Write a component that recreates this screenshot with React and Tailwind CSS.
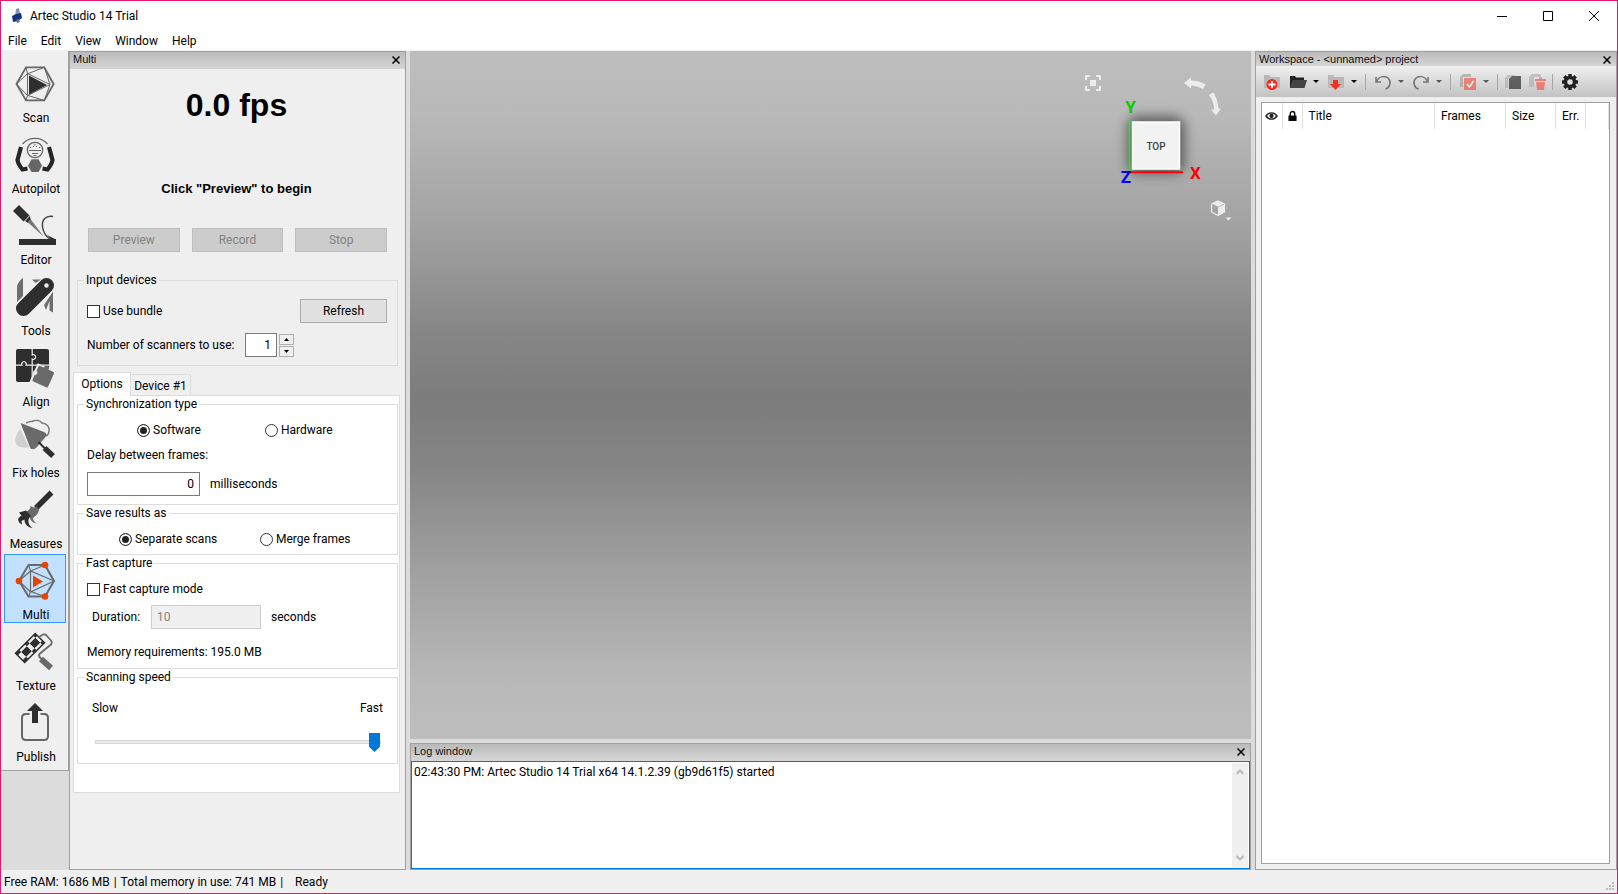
import React, { useState } from 'react';

const ScanIcon = () => (
  <svg viewBox="0 0 40 40" className="size-10 overflow-visible" fill="none" stroke="#666" strokeWidth="1.5">
    <path d="M1.5 20L11 3.3h18.3L38.6 20l-9.3 16.4H11z" strokeWidth="1.8" />
    <path d="M12.5 9.500v22L35 20.500z M11 3.300l1.500 6.500L29.300 3.300M29.300 3.300L35 20.500M11 36.400l1.500-5L29.300 36.400M29.300 36.400L35 20.500M1.500 20l11-10.500M1.500 20l11 11.500" strokeWidth="1" />
    <path d="M14 11.500v19l18-9.500z" fill="#2e2e2e" stroke="none" />
  </svg>
);

const AutopilotIcon = () => (
  <svg viewBox="0 0 40 40" className="size-10 overflow-visible" fill="none" stroke="#666">
    <path d="M7.500 9C14 1.500 26 1.500 32.500 9" strokeWidth="1.2" />
    <circle cx="20" cy="15" r="7.700" strokeWidth="1.300" />
    <path d="M14 15.500h12M17 18.500h6M18 11.500h1M21 11.500h1M15 12.500h1M24 12.500h1M20 9v1.500M18.500 20.500h3" strokeWidth="1" />
    <path d="M6 12L2.500 25q.5 4 5 9.500l5-1" stroke="#262626" strokeWidth="4.200" />
    <path d="M34 12l3.500 13q-.5 4-5 9.500l-5-1" stroke="#262626" strokeWidth="4.200" />
    <path d="M16.500 24.300h7l3.500 6.400-3.500 6.300h-7L13 30.700z" fill="#666" stroke="none" />
  </svg>
);

const EditorIcon = () => (
  <svg viewBox="0 0 40 40" className="size-10 overflow-visible" fill="none">
    <path d="M1 2l10.500 10.500" stroke="#2e2e2e" strokeWidth="8.500" />
    <path d="M10 15l5-5 1 5-3 2z" fill="#2e2e2e" />
    <path d="M12.500 16l3-3 13.500 18z" fill="#777" />
    <path d="M38 10.500C31 9 26.500 14 27.500 21c.8 6 4 10 8.500 13" stroke="#444" strokeWidth="1.500" />
    <path d="M32 29l9 4.500h-5z" fill="#2e2e2e" />
    <path d="M4 33h37v6H4z" fill="#2e2e2e" />
  </svg>
);

const ToolsIcon = () => (
  <svg viewBox="0 0 40 40" className="size-10 overflow-visible" fill="#6e6e6e">
    <path d="M2 25V11c0-4 3-8 6-10v18zM17 2.500h9l-5.500 3.500zM29 28l9-13.500v21l-3.500-2V24L31 33z" />
    <path d="M8.500 31.500L31.500 8.500" stroke="#2e2e2e" strokeWidth="15" strokeLinecap="round" />
    <circle cx="31.500" cy="8.500" r="2.200" fill="#efefef" />
  </svg>
);

const AlignIcon = () => (
  <svg viewBox="0 0 40 40" className="size-10 overflow-visible" fill="#2e2e2e">
    <rect x="1" y="1" width="33" height="33" rx="2" />
    <path d="M1 17.200h6a2.300 2.300 0 1 1 4 0h23M17.200 1v6a2.300 2.300 0 1 1 0 4v23" fill="none" stroke="#efefef" strokeWidth="1.200" />
    <g transform="rotate(24 28 28)">
      <rect x="18" y="18.500" width="21" height="21" fill="#efefef" />
      <rect x="20" y="20" width="17" height="17" rx="1.500" fill="#6a6a6a" />
      <circle cx="28" cy="19.500" r="2.500" fill="#6a6a6a" />
      <circle cx="19.500" cy="28" r="2.200" fill="#efefef" />
    </g>
  </svg>
);

const FixHolesIcon = () => (
  <svg viewBox="0 0 40 40" className="size-10 overflow-visible" fill="none">
    <path d="M5 10c-4 5-6 12-4 15 3 4 9 4 13 3z" fill="#d0d0d0" />
    <path d="M11 4c3-1 4-2 6-1.500 4-2 8-1 10 1.500 5 .5 8 4 7 8 0 3-1 4-3 5" stroke="#777" strokeWidth="1.400" />
    <path d="M5.500 4L29 13q4 2 1.500 5l-9 10.500q-3 3-6 1Z" fill="#6a6a6a" />
    <path d="M23.500 23l6.500 6.500" stroke="#2e2e2e" strokeWidth="2" />
    <path d="M29.500 29l8.500 8" stroke="#2e2e2e" strokeWidth="5.500" />
  </svg>
);

const MeasuresIcon = () => (
  <svg viewBox="0 0 40 40" className="size-10 overflow-visible" fill="none">
    <path d="M36.500 2.500L21 18" stroke="#2e2e2e" strokeWidth="5.500" />
    <path d="M15.500 16l3 1.500 3.500-1 2 4-2 4-4 3.500c0 2 1.500 4 3.500 5.500-5-1-7-4.500-7-8l-3-4c2.500-1 4-3 4-5.500z" fill="#6a6a6a" />
    <path d="M4 22.500l7-2 5 5.500c-5 4-2 10 1.500 12-5-.5-8-4-8-8.500l-3 1.500.5 3.500C4.500 33.500 2.500 31 3.500 28l3-2.500z" fill="#2e2e2e" />
  </svg>
);

const MultiIcon = () => (
  <svg viewBox="0 0 40 40" className="size-10 overflow-visible" fill="none" stroke="#6b6b6b">
    <path d="M4 20l9.500-16H30l9 16-9 15.500H13.500z" strokeWidth="2" />
    <path d="M15.500 10v21L39 20zM13.500 4l2 6L30 4M30 4l9 16M13.500 35.500l2-5L30 35.500M4 20l11.500-10M4 20l11.500 11" strokeWidth="1.200" />
    <path d="M18 14.500v12l10-6z" fill="#e64500" stroke="none" />
    <g fill="#e64500" stroke="none">
      <circle cx="30" cy="4" r="3.300" />
      <circle cx="4" cy="20" r="3.300" />
      <circle cx="30" cy="35.500" r="3.300" />
    </g>
  </svg>
);

const TextureIcon = () => (
  <svg viewBox="0 0 40 40" className="size-10 overflow-visible" fill="none">
    <g transform="translate(15 16) rotate(-45)">
      <rect x="-14" y="-6.500" width="28" height="13" fill="#efefef" stroke="#2e2e2e" strokeWidth="1.500" />
      <g fill="#2e2e2e">
        <path d="M-9-3.500h8v7h-8zM3-3.500h8v7H3z" />
        <path d="M-14-6.500h5v3h-5zM-1-6.500h4v3h-4zM11-6.500h3v3h-3zM-14 3.500h5v3h-5zM-1 3.500h4v3h-4zM11 3.500h3v3h-3z" />
      </g>
    </g>
    <path d="M24 5l4-2.500q2-.5 3.500 1l4.500 5q1.500 2 0 4L25 21.500q-2 2 0 4l3 3" stroke="#6a6a6a" strokeWidth="1.800" />
    <path d="M26 27l10 9" stroke="#6a6a6a" strokeWidth="6" />
  </svg>
);

const PublishIcon = () => (
  <svg viewBox="0 0 40 40" className="size-10 overflow-visible" fill="none">
    <path d="M14.500 11H11q-4 0-4 4v18q0 4 4 4h18q4 0 4-4V15q0-4-4-4h-3.500" stroke="#666" strokeWidth="2" />
    <path d="M20 0l8 8h-5v12h-6V8h-5z" fill="#2e2e2e" />
  </svg>
);

const modes = [
  { name: 'Scan', icon: ScanIcon },
  { name: 'Autopilot', icon: AutopilotIcon },
  { name: 'Editor', icon: EditorIcon },
  { name: 'Tools', icon: ToolsIcon },
  { name: 'Align', icon: AlignIcon },
  { name: 'Fix holes', icon: FixHolesIcon },
  { name: 'Measures', icon: MeasuresIcon },
  { name: 'Multi', icon: MultiIcon },
  { name: 'Texture', icon: TextureIcon },
  { name: 'Publish', icon: PublishIcon },
];

const PanelTitle = ({ children, className = 'h-[17px]' }) => (
  <div className={`shrink-0 flex items-start justify-between pl-[3px] pr-1 bg-linear-to-b from-[#bababa] to-[#d6d6d6] ${className}`}>
    <h2 className="font-['Liberation_Sans',sans-serif] text-[11px] leading-[15px] text-[#111]">{children}</h2>
    <button aria-label="Close" className="w-2.5 h-[15px] flex items-center justify-center">
      <svg viewBox="0 0 8 8" className="size-2" stroke="#000" strokeWidth="1.500">
        <path d="M.5 .5l7 7M7.500 .5l-7 7" />
      </svg>
    </button>
  </div>
);

const Group = ({ title, className, children }) => (
  <fieldset className={`border border-[#dcdcdc] pl-[9px] pr-2.5 min-w-0 ${className}`}>
    <legend className="-ml-[3px] px-0.5 leading-[15px]">{title}</legend>
    {children}
  </fieldset>
);

const Checkbox = ({ label }) => (
  <label className="flex items-center gap-[3px]">
    <input type="checkbox" className="appearance-none size-[13px] border border-[#333] bg-white checked:bg-[#333]" />
    {label}
  </label>
);

const Radio = ({ label, name, checked, onChange }) => (
  <label className="flex items-center gap-[3px]">
    <input
      type="radio"
      name={name}
      checked={checked}
      onChange={onChange}
      className="appearance-none size-[13px] rounded-full border border-[#333] bg-white checked:bg-[#222] checked:shadow-[inset_0_0_0_2px_#fff]"
    />
    {label}
  </label>
);

const MultiPanel = () => {
  const [scanners, setScanners] = useState(1);
  const [sync, setSync] = useState('software');
  const [save, setSave] = useState('separate');

  return (
    <section className="w-[337px] shrink-0 flex flex-col border border-[#a0a0a0] bg-[#efefef]">
      <PanelTitle>Multi</PanelTitle>
      <div className="pl-[3px] pr-[5px] flex flex-col">
        <div className="font-['Liberation_Sans',sans-serif] font-bold text-center">
          <p className="text-[32px] leading-9 mt-[18px]">0.0 fps</p>
          <p className="text-[13px] leading-4 mt-[58px]">Click "Preview" to begin</p>
        </div>
        <div className="grid grid-cols-3 gap-3 mt-[31px] pl-[15px] pr-[13px]">
          {['Preview', 'Record', 'Stop'].map(name => (
            <button key={name} disabled className="h-6 border border-[#bfbfbf] bg-[#ccc] text-[#838383]">
              {name}
            </button>
          ))}
        </div>

        <div className="mt-[21px] pl-1 pr-0.5">
          <Group title="Input devices" className="h-[93px]">
            <div className="flex items-center justify-between mt-[11px]">
              <Checkbox label="Use bundle" />
              <button className="w-[87px] h-6 border border-[#adadad] bg-[#e1e1e1]">Refresh</button>
            </div>
            <div className="flex items-center mt-2.5">
              <label htmlFor="scanners" className="w-[158px]">Number of scanners to use:</label>
              <input
                id="scanners"
                type="text"
                value={scanners}
                onChange={e => setScanners(e.target.value)}
                className="w-8 h-6 border border-[#7a7a7a] bg-white text-right pr-[5px]"
              />
              <div className="flex flex-col gap-px ml-0.5">
                <button aria-label="More" onClick={() => setScanners(Number(scanners) + 1)} className="w-[15px] h-[11px] border border-[#adadad] bg-[#f0f0f0] flex items-center justify-center">
                  <svg viewBox="0 0 5 3" className="w-[5px] h-[3px]"><path d="M0 3L2.500 0 5 3z" /></svg>
                </button>
                <button aria-label="Fewer" onClick={() => setScanners(Math.max(1, scanners - 1))} className="w-[15px] h-[11px] border border-[#adadad] bg-[#f0f0f0] flex items-center justify-center">
                  <svg viewBox="0 0 5 3" className="w-[5px] h-[3px]"><path d="M0 0L2.500 3 5 0z" /></svg>
                </button>
              </div>
            </div>
          </Group>
        </div>

        <div role="tablist" className="flex items-end mt-1.5">
          <button role="tab" aria-selected="true" className="relative z-10 -mb-px w-[58px] h-6 pb-0.5 border border-b-0 border-[#dcdcdc] bg-white">Options</button>
          <button role="tab" aria-selected="false" className="w-[60px] h-[21px] pt-px border border-l-0 border-b-0 border-[#dcdcdc] bg-[#f0f0f0]">Device #1</button>
        </div>
        <div className="h-[398px] flex flex-col gap-px border border-[#dcdcdc] bg-white pl-[3px] pr-px pt-px">
          <Group title="Synchronization type" className="h-[108px]">
            <div className="grid grid-cols-[128px_1fr] mt-2.5 pl-[50px]">
              <Radio label="Software" name="sync" checked={sync === 'software'} onChange={() => setSync('software')} />
              <Radio label="Hardware" name="sync" checked={sync === 'hardware'} onChange={() => setSync('hardware')} />
            </div>
            <label htmlFor="delay" className="block mt-[9px]">Delay between frames:</label>
            <div className="flex items-center gap-[10px] mt-[9px]">
              <input id="delay" type="text" defaultValue="0" className="w-[113px] h-6 border border-[#7a7a7a] bg-white text-right pr-[5px]" />
              <span>milliseconds</span>
            </div>
          </Group>
          <Group title="Save results as" className="h-[49px]">
            <div className="grid grid-cols-[141px_1fr] mt-2.5 pl-8">
              <Radio label="Separate scans" name="save" checked={save === 'separate'} onChange={() => setSave('separate')} />
              <Radio label="Merge frames" name="save" checked={save === 'merge'} onChange={() => setSave('merge')} />
            </div>
          </Group>
          <Group title="Fast capture" className="h-[113px]">
            <div className="mt-2.5">
              <Checkbox label="Fast capture mode" />
            </div>
            <div className="flex items-center mt-2 pl-[5px]">
              <label htmlFor="duration" className="w-[59px]">Duration:</label>
              <input id="duration" type="text" disabled defaultValue="10" className="w-[110px] h-6 border border-[#ccc] bg-[#f0f0f0] text-[#838383] pl-[5px]" />
              <span className="ml-2.5">seconds</span>
            </div>
            <p className="mt-[15px]">Memory requirements: 195.0 MB</p>
          </Group>
          <Group title="Scanning speed" className="h-[94px]">
            <div className="flex justify-between mt-[15px] pl-[5px] pr-1">
              <span>Slow</span>
              <span>Fast</span>
            </div>
            <input
              type="range"
              aria-label="Scanning speed"
              min="0"
              max="10"
              defaultValue="10"
              className="appearance-none block ml-2 mt-4 w-[286px] h-5 bg-transparent [&::-webkit-slider-runnable-track]:h-1 [&::-webkit-slider-runnable-track]:border [&::-webkit-slider-runnable-track]:border-[#d6d6d6] [&::-webkit-slider-runnable-track]:bg-[#e7eaea] [&::-webkit-slider-thumb]:appearance-none [&::-webkit-slider-thumb]:w-[11px] [&::-webkit-slider-thumb]:h-[19px] [&::-webkit-slider-thumb]:-mt-2 [&::-webkit-slider-thumb]:bg-[#0078d7] [&::-webkit-slider-thumb]:[clip-path:polygon(0_0,100%_0,100%_72%,50%_100%,0_72%)]"
            />
          </Group>
        </div>
      </div>
    </section>
  );
};

// view cube, axes and camera controls in the corner of the 3D view
const ViewControls = () => (
  <svg viewBox="0 1 191 180" className="absolute top-0 right-0 w-[191px] h-[180px]" fill="none">
    <defs>
      <filter id="cubeShadow" x="-50%" y="-50%" width="200%" height="200%">
        <feGaussianBlur stdDeviation="6" />
      </filter>
    </defs>
    <path d="M26 30v-4h4M36 26h4v4M40 36v4h-4M30 40h-4v-4" stroke="#ececec" strokeWidth="2" />
    <rect x="30" y="30" width="6" height="6" fill="#ececec" />
    <g fill="#ececec">
      <path d="M124 33l7-5.500v3c6 0 10 1.500 14.500 4l-2.500 4.500c-4-2-7-3-12-3.500v3z" />
      <path d="M149 45l4.500-2.500c3 5 4.500 10 5 16h2.500l-5 7-5-6h3c0-6-2-10-5-14.500z" />
    </g>
    <rect x="67" y="66" width="58" height="58" rx="12" fill="#333" opacity=".65" filter="url(#cubeShadow)" />
    <rect x="72.500" y="72" width="47" height="47" fill="#f2f2f2" stroke="#fff" strokeWidth="1.500" />
    <path d="M69.500 69v53" stroke="#0f0" strokeWidth="1.500" />
    <path d="M70 122.300h53" stroke="#f00" strokeWidth="2" />
    <g fontFamily="Roboto, sans-serif" fontWeight="700" fontSize="17" textAnchor="middle">
      <text x="70.500" y="63" fill="#00d000">Y</text>
      <text x="135.500" y="129" fill="#f00">X</text>
      <text x="66" y="133" fill="#00f">Z</text>
    </g>
    <text x="96" y="99.500" fontFamily="Roboto, sans-serif" fontWeight="500" fontSize="10" textAnchor="middle" fill="#444">TOP</text>
    <path d="M158 151l6.500 3v8l-6.500 3.500-6.500-3.500v-8z" stroke="#ececec" strokeWidth="1.200" />
    <path d="M151.500 154l6.500-3 6.500 3-6.500 3zM158 157l6.500-3v8l-6.500 3.500z" fill="#ececec" />
    <path d="M151.500 154l6.500 3 6.500-3" stroke="#999" strokeWidth=".6" />
    <path d="M165.500 167.500h6l-3 3z" fill="#ececec" />
  </svg>
);

const FolderShape = ({ fill }) => <path d="M1 2h5l1.500 2H17v11H1z" fill={fill} />;

const DropArrow = () => (
  <svg viewBox="0 0 6 3" className="w-[6px] h-[3px]"><path d="M0 0h6L3 3z" /></svg>
);

const Separator = () => <span className="w-px h-4 bg-[#a8a8a8]" />;

const ToolButton = ({ label, menu, disabled, children }) => (
  <button aria-label={label} disabled={disabled} className="flex items-center gap-[6px] disabled:opacity-60">
    <svg viewBox="0 0 18 18" className="size-[18px]" fill="none">{children}</svg>
    {menu && <DropArrow />}
  </button>
);

const gearTeeth = [0, 45, 90, 135];

const WorkspaceToolbar = () => (
  <div className="h-[31px] shrink-0 flex items-center pl-[7px] bg-linear-to-b from-[#f0f0f0] to-[#c3c3c3]">
    <div className="flex items-center gap-2">
      <ToolButton label="New project">
        <FolderShape fill="#b9b9b9" />
        <circle cx="9" cy="11.500" r="5.500" fill="#f03020" />
        <path d="M9 8v7M5.500 11.500h7" stroke="#fff" strokeWidth="1.800" />
      </ToolButton>
      <ToolButton label="Open project" menu>
        <path d="M1 3h5l1 1.500h8V15H1z" fill="#222" />
        <path d="M3.500 7H18l-2.500 8H1z" fill="#444" />
      </ToolButton>
      <ToolButton label="Import" menu>
        <FolderShape fill="#b9b9b9" />
        <path d="M6 7h5v4h3l-5.500 6L3 11h3z" fill="#f03020" />
      </ToolButton>
      <Separator />
      <ToolButton label="Undo" menu disabled>
        <path d="M2 4v5h5M2.500 8.500C5 3 11 2 14.500 5.500c3 3.500 1.500 9-3 10.500" stroke="#333" strokeWidth="1.500" />
      </ToolButton>
      <ToolButton label="Redo" menu disabled>
        <path d="M16 4v5h-5M15.500 8.500C13 3 7 2 3.500 5.500c-3 3.500-1.500 9 3 10.500" stroke="#333" strokeWidth="1.500" />
      </ToolButton>
      <Separator />
      <ToolButton label="Select" menu disabled>
        <path d="M4 1h8v3H4v10H1V4z" fill="#999" />
        <path d="M5 5h12v12H5z" fill="#f04a3a" />
        <path d="M8 11l2.500 3L14.500 8" stroke="#fff" strokeWidth="1.500" />
      </ToolButton>
      <Separator />
    </div>
    <div className="flex items-center gap-1.5 ml-1.5">
      <ToolButton label="Duplicate" disabled>
        <path d="M4 2h8L6 4 4 6v9H1V5z" fill="#aaa" />
        <path d="M8 3h9v13H5V6z" fill="#111" />
      </ToolButton>
      <ToolButton label="Delete" disabled>
        <path d="M4 1h9v3H6v10H1V4z" fill="#aaa" />
        <path d="M7 6h11v2H7zM11 4.500h3V6h-3zM8 9h9l-1 8H9z" fill="#f04a3a" />
      </ToolButton>
      <Separator />
    </div>
    <div className="ml-2">
      <ToolButton label="Settings">
        <g stroke="#222" strokeWidth="3.500">
          {gearTeeth.map(angle => (
            <path key={angle} d="M9 1v16" transform={`rotate(${angle} 9 9)`} />
          ))}
        </g>
        <circle cx="9" cy="9" r="4.500" fill="#e0e0e0" stroke="#222" strokeWidth="3.500" />
      </ToolButton>
    </div>
  </div>
);

const Workspace = () => (
  <section className="w-[362px] shrink-0 flex flex-col border border-[#a0a0a0] bg-[#efefef]">
    <PanelTitle className="h-3.5">Workspace - &lt;unnamed&gt; project</PanelTitle>
    <WorkspaceToolbar />
    <div className="flex-1 ml-[5px] mr-1.5 mt-[5px] mb-[5px] border border-[#a0a0a0] bg-white">
      <table className="w-full table-fixed text-left">
        <thead>
          <tr className="h-[26px] [&>th]:font-normal [&>th]:border-r [&>th]:border-[#e0e0e0]">
            <th className="w-5">
              <svg viewBox="0 0 14 10" className="w-[13px] h-2.5 mx-auto" fill="none" role="img" aria-label="Visible">
                <path d="M1 5c3-4.500 9-4.500 12 0-3 4.500-9 4.500-12 0z" stroke="#222" strokeWidth="1.500" />
                <circle cx="7" cy="5" r="2.300" fill="#222" />
              </svg>
            </th>
            <th className="w-5">
              <svg viewBox="0 0 10 12" className="w-[9px] h-3 mx-auto" fill="none" role="img" aria-label="Locked">
                <path d="M2.500 6V3.500a2.500 2.500 0 0 1 5 0V6" stroke="#000" strokeWidth="1.500" />
                <rect x=".5" y="5.500" width="9" height="6" fill="#000" />
              </svg>
            </th>
            <th className="pl-1.5">Title</th>
            <th className="w-[71px] pl-1.5">Frames</th>
            <th className="w-[50px] pl-1.5">Size</th>
            <th className="w-[30px] pl-1.5">Err.</th>
            <th className="w-[23px]"></th>
          </tr>
        </thead>
      </table>
    </div>
  </section>
);

const LogWindow = () => (
  <section className="h-[127px] shrink-0 flex flex-col border border-[#a0a0a0] bg-[#efefef]">
    <PanelTitle>Log window</PanelTitle>
    <div className="flex-1 flex border border-[#0078d7] bg-white">
      <p className="flex-1 px-0.5 pt-0.5">02:43:30 PM: Artec Studio 14 Trial x64 14.1.2.39 (gb9d61f5) started</p>
      <div className="w-4 my-px mr-px flex flex-col items-center justify-between py-1.5 bg-[#f0f0f0]">
        <svg viewBox="0 0 8 6" className="w-2 h-1.5" fill="none" stroke="#bbb" strokeWidth="2"><path d="M.5 5L4 1.500 7.500 5" /></svg>
        <svg viewBox="0 0 8 6" className="w-2 h-1.5" fill="none" stroke="#bbb" strokeWidth="2"><path d="M.5 1L4 4.500 7.500 1" /></svg>
      </div>
    </div>
  </section>
);

export default function App() {
  const [mode, setMode] = useState('Multi');

  return (
    <div className="min-h-screen flex flex-col border border-[#e5186e] bg-[#dcdcdc] font-['Roboto',sans-serif] text-[12px] leading-4 text-black">
      <header className="bg-white border-b border-[#f0f0f0]">
        <div className="h-[30px] flex items-center">
          <svg viewBox="0 0 12 16" className="w-3 h-4 ml-2.5" fill="none">
            <path d="M5 1l3-1 1 6-2 3-3-1z" fill="#8a94a8" />
            <path d="M1 8l4-2 5-1 1 5-4 3-5 1z" fill="#12307e" />
            <path d="M5 12l3-1 1 3-3 1z" fill="#6a7080" />
          </svg>
          <h1 className="ml-[7px] flex-1">Artec Studio 14 Trial</h1>
          <button aria-label="Minimize" className="w-[46px] h-full flex items-center justify-center">
            <svg viewBox="0 0 10 10" className="size-2.5" stroke="#000"><path d="M0 5.500h10" /></svg>
          </button>
          <button aria-label="Maximize" className="w-[46px] h-full flex items-center justify-center">
            <svg viewBox="0 0 10 10" className="size-2.5" fill="none" stroke="#000"><path d="M.5 .5h9v9h-9z" /></svg>
          </button>
          <button aria-label="Close" className="w-[46px] h-full flex items-center justify-center">
            <svg viewBox="0 0 10 10" className="size-2.5" stroke="#000"><path d="M0 0l10 10M10 0L0 10" /></svg>
          </button>
        </div>
        <nav className="h-[19px] flex items-center">
          {['File', 'Edit', 'View', 'Window', 'Help'].map(item => (
            <button key={item} className="px-[7px]">{item}</button>
          ))}
        </nav>
      </header>

      <main className="flex-1 flex">
        <div className="w-[68px] shrink-0">
          <div className="flex flex-col gap-0.5 pt-1.5 pb-[5px] pl-[3px] pr-0.5 border-r border-b border-[#a0a0a0] bg-[#efefef]">
            {modes.map(({ name, icon: Icon }) => (
              <button
                key={name}
                onClick={() => setMode(name)}
                className={`h-[69px] flex flex-col items-center gap-1.5 pt-1.5 border whitespace-nowrap ${mode === name ? 'border-[#3399ff] bg-[#c2e0ff]' : 'border-transparent'}`}
              >
                <Icon />
                <span className="pl-0.5">{name}</span>
              </button>
            ))}
          </div>
        </div>
        <MultiPanel />
        <div className="flex-1 min-w-0 flex flex-col gap-1 mx-1">
          <div className="relative flex-1 bg-[linear-gradient(#bdbdbd,#b9b9b9_9%,#a1a1a1_26%,#868686_41%,#7c7c7c_51%,#868686_61%,#a1a1a1_76%,#b9b9b9_92%,#bdbdbd)]">
            <ViewControls />
          </div>
          <LogWindow />
        </div>
        <Workspace />
      </main>

      <footer className="h-[23px] flex items-center justify-between pl-[3px] bg-[#f0f0f0]">
        <div className="flex items-center">
          <span>Free RAM: 1686 MB</span>
          <span className="mx-1">|</span>
          <span>Total memory in use: 741 MB</span>
          <span className="mx-1">|</span>
          <span className="ml-2">Ready</span>
        </div>
        <svg viewBox="0 0 9 9" className="size-[9px] self-end mb-0.5 mr-0.5" fill="#bbb">
          <path d="M6 0h2v2H6zM6 3h2v2H6zM3 3h2v2H3zM6 6h2v2H6zM3 6h2v2H3zM0 6h2v2H0z" />
        </svg>
      </footer>
    </div>
  );
}
